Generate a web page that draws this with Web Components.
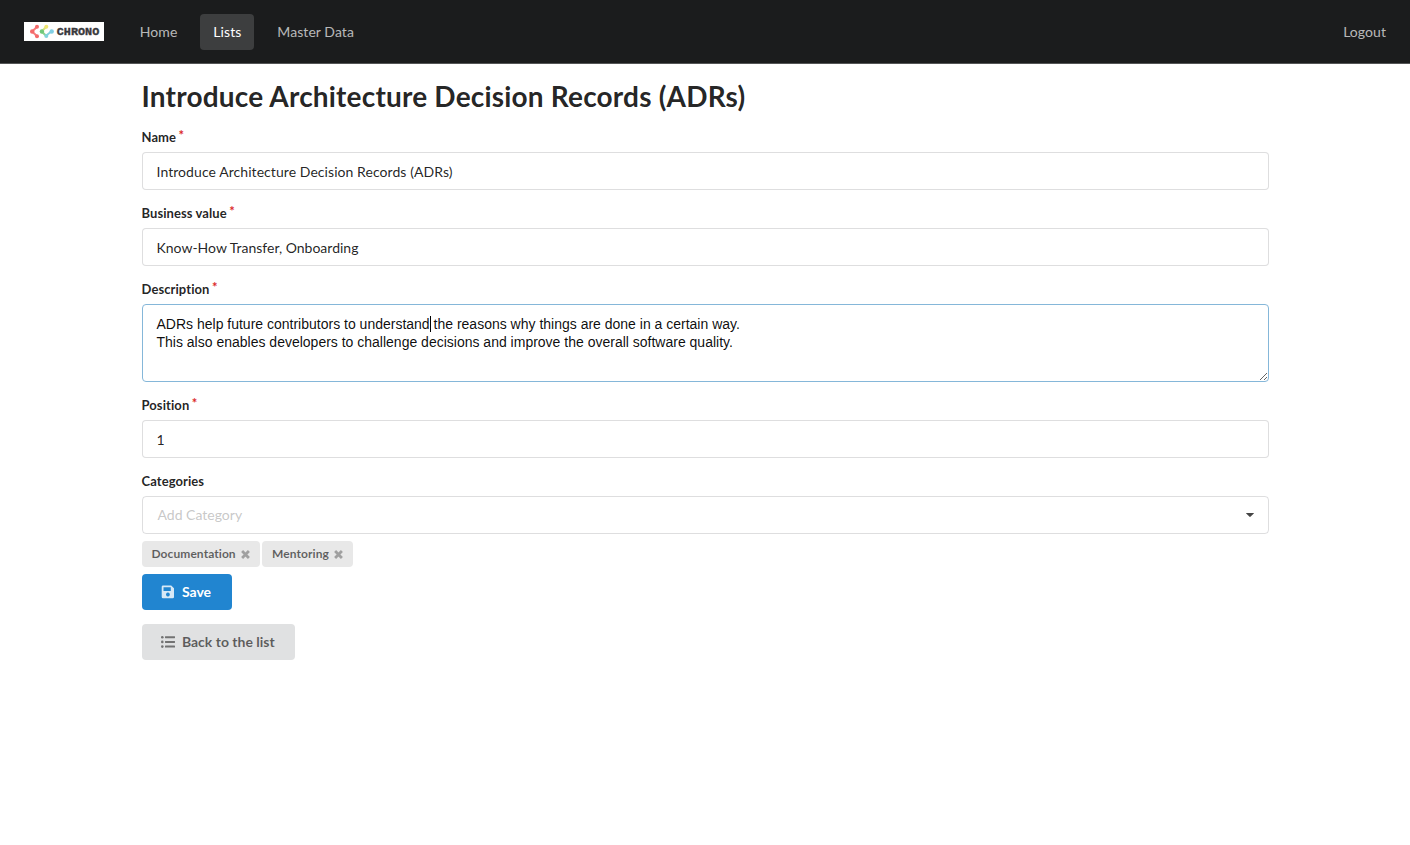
<!DOCTYPE html>
<html lang="en">
<head>
<meta charset="utf-8">
<title>Chrono</title>
<style>
html, body { margin: 0; }
body { background: #fff; color: rgba(0,0,0,.87); font: 14px/20px Lato, "Liberation Sans", sans-serif; }
</style>
</head>
<body>
<chrono-app></chrono-app>
<script>
function define(name, markup) {
  const template = document.createElement('template');
  template.innerHTML = '<style>*{box-sizing:border-box}</style>' + markup.trim();
  customElements.define(name, class extends HTMLElement {
    constructor() {
      super();
      this.attachShadow({ mode: 'open' }).append(template.content.cloneNode(true));
    }
  });
}

define('chrono-logo', `
<style>
:host { display: block; width: 80px; height: 19px; background: #fff; }
svg { display: block; }
text { font: 700 11px "Liberation Mono", monospace; fill: #38383b; stroke: #38383b; stroke-width: .35px; }
</style>
<svg width="80" height="19" viewBox="0 0 80 19">
  <g fill="none" stroke-width="2">
    <path stroke="#f67c7c" d="M13 4.7 8.2 9.5 13 14.2"/>
    <path stroke="#8ed28f" d="M17.7 9.5 22 13.8"/>
    <path stroke="#d9e37c" d="M17.7 9.5 22 5"/>
    <path stroke="#80d0de" d="M22 13.8 27.2 9.5"/>
  </g>
  <g fill="#f46a6a"><circle cx="13" cy="4.7" r="2"/><circle cx="8.2" cy="9.5" r="2.2"/><circle cx="13" cy="14.2" r="2"/></g>
  <circle cx="17.9" cy="9.5" r="2.2" fill="#6fc879"/>
  <circle cx="22.3" cy="4.8" r="2" fill="#f1e570"/>
  <circle cx="22.3" cy="14" r="2" fill="#7fd3dc"/>
  <circle cx="27.7" cy="9.5" r="2.2" fill="#80cfe4"/>
  <text x="32.8" y="13" textLength="42.4" lengthAdjust="spacingAndGlyphs">CHRONO</text>
</svg>`);

define('nav-item', `
<style>
:host { display: block; height: 36px; padding: 8px 13px; line-height: 20px; color: rgba(255,255,255,.7); border-radius: 4px; letter-spacing: .06px; }
:host([active]) { background: #3d3e3f; color: #fff; }
</style><slot></slot>`);

define('nav-bar', `
<style>
:host { display: flex; align-items: center; height: 64px; padding: 0 11px 0 24px; background: #1b1c1d; border-bottom: 1px solid #545556; }
nav { display: flex; gap: 10px; margin-left: 22.8px; flex: 1; }
</style>
<chrono-logo></chrono-logo><nav><slot></slot></nav><slot name="end"></slot>`);

define('form-field', `
<style>
:host { display: block; margin-bottom: 14px; }
.label { display: flex; height: 20px; margin-bottom: 4px; font-size: 13px; font-weight: 700; line-height: 18px; letter-spacing: .08px; }
:host([required]) .label::after { content: "*"; color: #db2828; margin: -2px 0 0 2.5px; line-height: 18px; }
</style>
<div class="label"><slot name="label"></slot></div><slot></slot>`);

define('text-box', `
<style>
:host { display: block; height: 38px; padding: 9px 14px 9px; border: 1px solid rgba(34,36,38,.15); border-radius: 4px; background: #fff; line-height: 20px; }
:host([title-text]) { letter-spacing: .065px; }
</style><slot></slot>`);

define('text-area', `
<style>
:host { display: block; height: 78px; padding: 10px 14px; border: 1px solid #85b7d9; border-radius: 4px; overflow: auto; resize: vertical; color: rgba(0,0,0,.95); font: 14px/18px "Liberation Sans", Arial, sans-serif; white-space: pre-wrap; }
</style><slot></slot>`);

define('text-caret', `
<style>:host { display: inline-block; width: 1px; height: 16px; margin: -4px -1px -4px 0; background: #000; vertical-align: 1px; }</style>`);

define('select-box', `
<style>
:host { display: flex; align-items: center; justify-content: space-between; height: 38px; padding: 0 13px 0 15px; border: 1px solid rgba(34,36,38,.15); border-radius: 4px; color: rgba(191,191,191,.87); }
svg { display: block; margin-right: .5px; }
</style><slot></slot>
<svg width="8" height="4" viewBox="0 0 8 4"><path d="M.5 0h7q.8 0 .3.6L4.4 3.8q-.4.3-.8 0L.2.6Q-.3 0 .5 0z" fill="#454545"/></svg>`);

define('tag-chip', `
<style>
:host { display: flex; align-items: center; height: 26px; padding: 0 10px; gap: 5.4px; background: #e8e8e8; border-radius: 4px; color: rgba(0,0,0,.6); font-size: 12px; font-weight: 700; line-height: 12px; letter-spacing: .07px; }
svg { display: block; }
</style><slot></slot>
<svg width="9" height="9" viewBox="0 0 9 9"><path d="M1.1 1.1 7.9 7.9M7.9 1.1 1.1 7.9" stroke="#a0a0a0" stroke-width="2.8"/></svg>`);

define('action-button', `
<style>
:host { display: flex; align-items: center; width: max-content; height: 36px; padding: 0 20.6px 0 19px; gap: 7.4px; background: #e0e1e2; border-radius: 4px; color: rgba(0,0,0,.6); font-weight: 700; line-height: 14px; }
:host([primary]) { background: #2185d0; color: #fff; }
</style><slot name="icon"></slot><span><slot></slot></span>`);

define('save-icon', `
<style>:host { display: block; width: 14px; height: 14px; opacity: .82; } svg { display: block; }</style>
<svg width="14" height="14" viewBox="0 0 14 14"><path fill="currentColor" fill-rule="evenodd" d="M2 .5h8.2l2.8 2.8V12q0 1.3-1.3 1.3H2Q.7 13.3.7 12V1.8Q.7.5 2 .5zM2.5 2.3v3.6h7.3V2.3zM6.9 7.6a1.9 1.9 0 1 0 .01 0z"/></svg>`);

define('list-icon', `
<style>:host { display: block; width: 14px; height: 14px; opacity: .82; } svg { display: block; }</style>
<svg width="14" height="14" viewBox="0 0 14 14" fill="currentColor"><circle cx="1.3" cy="2.2" r="1.3"/><circle cx="1.3" cy="6.9" r="1.3"/><circle cx="1.3" cy="11.6" r="1.3"/><rect x="4" y="1.2" width="10" height="2" rx=".4"/><rect x="4" y="5.9" width="10" height="2" rx=".4"/><rect x="4" y="10.6" width="10" height="2" rx=".4"/></svg>`);

define('chrono-app', `
<style>
:host { display: block; }
main { width: 1127px; margin: 0 auto; padding-top: 14px; }
h1 { margin: 0 0 14px; height: 36px; font-size: 28px; line-height: 36px; font-weight: 700; letter-spacing: .185px; }
.tags { display: flex; gap: 2px; margin: -7px 0 7px; }
action-button + action-button { margin-top: 14px; }
</style>
<nav-bar>
  <nav-item>Home</nav-item><nav-item active>Lists</nav-item><nav-item>Master Data</nav-item>
  <nav-item slot="end">Logout</nav-item>
</nav-bar>
<main>
  <h1>Introduce Architecture Decision Records (ADRs)</h1>
  <form-field required><span slot="label">Name</span><text-box title-text>Introduce Architecture Decision Records (ADRs)</text-box></form-field>
  <form-field required><span slot="label">Business value</span><text-box>Know-How Transfer, Onboarding</text-box></form-field>
  <form-field required><span slot="label">Description</span><text-area>ADRs help future contributors to understand<text-caret></text-caret> the reasons why things are done in a certain way.
This also enables developers to challenge decisions and improve the overall software quality.</text-area></form-field>
  <form-field required><span slot="label">Position</span><text-box>1</text-box></form-field>
  <form-field><span slot="label">Categories</span><select-box>Add Category</select-box></form-field>
  <div class="tags"><tag-chip>Documentation</tag-chip><tag-chip>Mentoring</tag-chip></div>
  <action-button primary><save-icon slot="icon"></save-icon>Save</action-button>
  <action-button><list-icon slot="icon"></list-icon>Back to the list</action-button>
</main>`);
</script>
</body>
</html>
